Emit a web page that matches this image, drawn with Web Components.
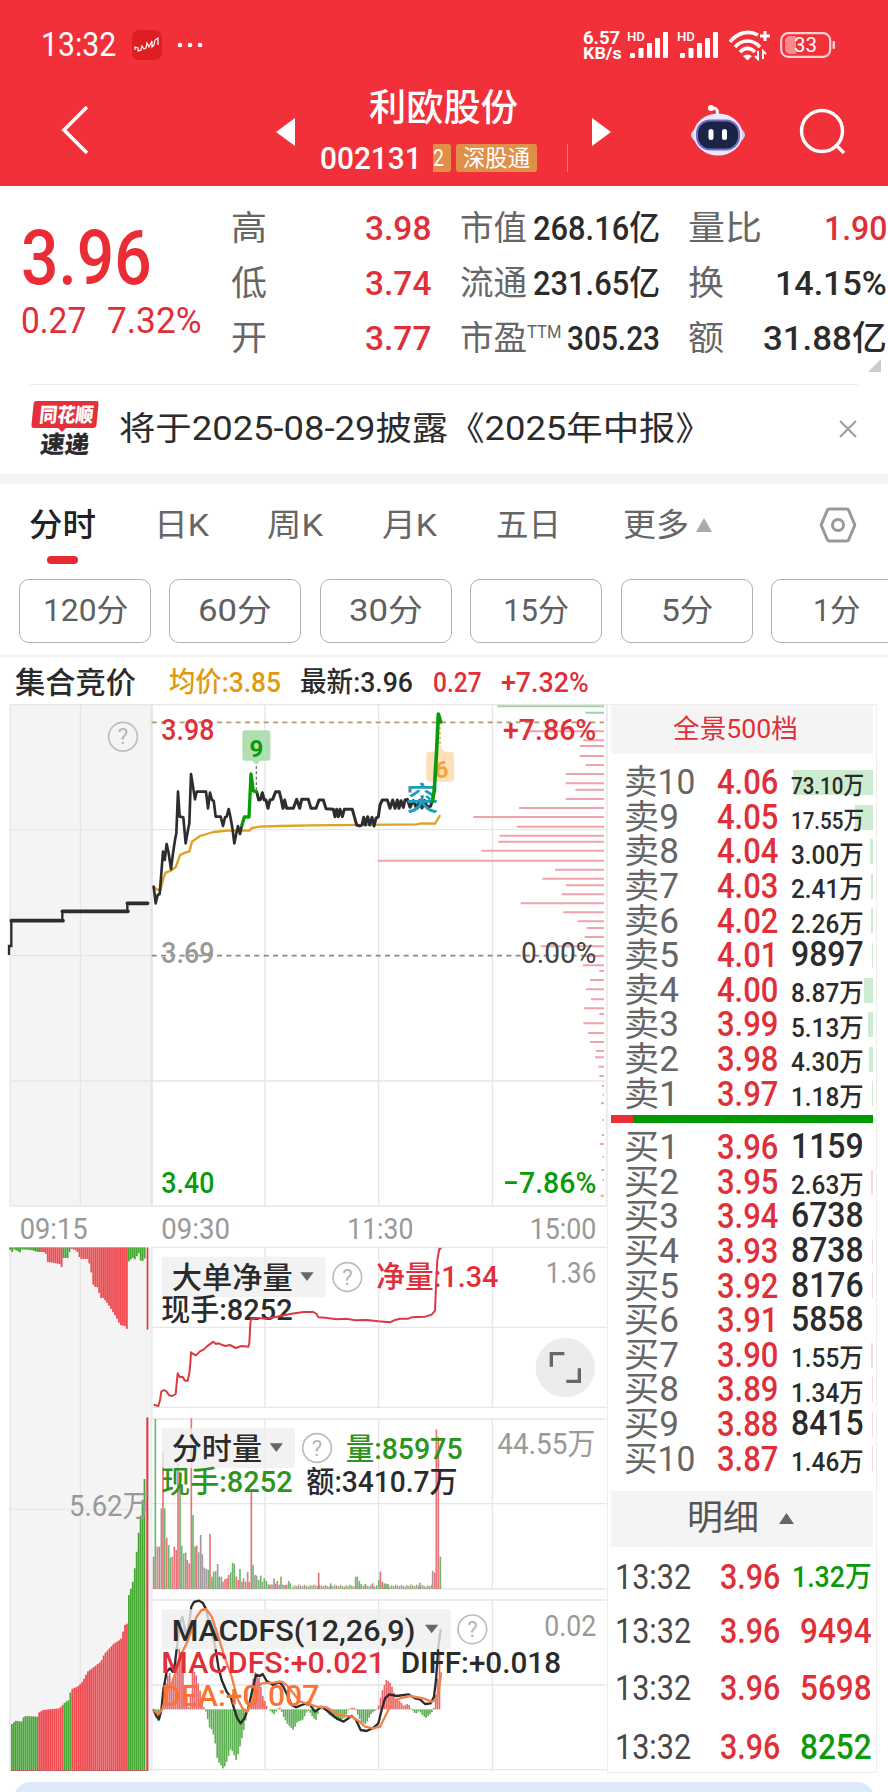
<!DOCTYPE html>
<html lang="zh-CN">
<head>
<meta charset="utf-8">
<title>利欧股份 002131</title>
<style>
    html, body {
        margin: 0;
        background: #fff;
    }
    body {
        width: 888px;
        height: 1792px;
        overflow: hidden;
        font-family: Roboto, "Noto Sans CJK SC", sans-serif;
        font-weight: 400;
        color: #2b2b2b;
    }
</style>
</head>
<body>
<stock-app></stock-app>

<script>
const RED = '#e02f38';
const GREEN = '#0a9a0a';

// text squeezed or stretched horizontally to the width given in "w"
class FitText extends HTMLElement {
    constructor() {
        super();
        this.attachShadow({ mode: 'open' });
        this.shadowRoot.innerHTML = `
        <style>
            :host { display: block; flex: none; white-space: nowrap; line-height: 1.2; }
            span { display: inline-block; transform-origin: 0 50%; }
        </style>
        <span><slot></slot></span>`;
    }
    connectedCallback() {
        const w = Number(this.getAttribute('w'));
        const span = this.shadowRoot.querySelector('span');
        this.style.width = w + 'px';
        if (this.hasAttribute('size')) this.style.fontSize = this.getAttribute('size') + 'px';
        const natural = span.offsetWidth;
        if (natural) span.style.transform = `scaleX(${w / natural})`;
    }
}

class StatusBar extends HTMLElement {
    constructor() {
        super();
        this.attachShadow({ mode: 'open' });
        const signal = `
            <svg width="42" height="30" viewBox="0 0 42 30" fill="#fff">
                <rect x="3" y="23" width="5" height="5" rx="1"/><rect x="11.500" y="18" width="5" height="10" rx="1"/>
                <rect x="20" y="13" width="5" height="15" rx="1"/><rect x="28" y="8" width="5" height="20" rx="1"/>
                <rect x="36" y="2" width="5" height="26" rx="1"/>
                <text x="0" y="11" font-size="12.500" font-weight="500" textLength="18" lengthAdjust="spacingAndGlyphs">HD</text>
            </svg>`;
        this.shadowRoot.innerHTML = `
        <style>
            :host { display: flex; align-items: center; height: 60px; padding: 15px 53px 0 0; color: #fff; box-sizing: content-box; }
            .time { margin-left: 41px; }
            .app { margin-left: 16px; }
            .dots { margin-left: 16px; flex: 1 1 0; min-width: 0; }
            .speed { width: 39px; margin-right: 5px; font-weight: 700; }
            .wifi { margin: 0 9px 0 10px; }
            svg { flex: none; display: block; }
            .s2 { margin-left: 8px; }
        </style>
        <fit-text class="time" w="75" size="33">13:32</fit-text>
        <svg class="app" width="30" height="30" viewBox="0 0 30 30">
            <rect width="30" height="30" rx="7" fill="#dd1f24"/>
            <path d="M3 20v-3l3 1v3l3-1 1-4 2 3 2-1 1-5 2 4 3-6v6l2-2 1-5 3-2v7" fill="none" stroke="#fff" stroke-width="1.200"/>
        </svg>
        <svg class="dots" width="30" height="8" viewBox="0 0 30 8" preserveAspectRatio="xMinYMid"><g fill="#fff"><circle cx="2" cy="4" r="2.300"/><circle cx="12" cy="4" r="2.300"/><circle cx="22" cy="4" r="2.300"/></g></svg>
        <div class="speed">
            <fit-text w="37" size="18" style="line-height:17px">6.57</fit-text>
            <fit-text w="39" size="17" style="line-height:15px">KB/s</fit-text>
        </div>
        ${signal}
        <span class="s2">${signal}</span>
        <svg class="wifi" width="42" height="31" viewBox="0 0 42 31" fill="none" stroke="#fff" stroke-width="3.600">
            <path d="M1 12C9 2 20 0 29 5M6 17c7-8 18-8 25 0M11 22c5-5 10-5 15 0"/>
            <path d="M14 26l4.500 4.500L23 26q-4.500-3-9 0z" fill="#fff" stroke="none"/>
            <path d="M36 1v10M31 6h10" stroke-width="3"/>
            <path d="M29 21v8l-3-3M34 29v-8l3 3" stroke-width="2"/>
        </svg>
        <svg width="55" height="26" viewBox="0 0 55 26">
            <rect x="1.200" y="1.200" width="49" height="23.600" rx="7" fill="none" stroke="#fbd0d0" stroke-width="2.200"/>
            <path d="M10 4h6v18h-6a5 5 0 0 1-5-5V9a5 5 0 0 1 5-5z" fill="#fb8a8c"/>
            <rect x="52.500" y="9" width="2.500" height="8" rx="1" fill="#fbd0d0"/>
            <text x="14" y="20" font-size="20" fill="#fff" textLength="23" lengthAdjust="spacingAndGlyphs">33</text>
        </svg>`;
    }
}

class StockHeader extends HTMLElement {
    constructor() {
        super();
        this.attachShadow({ mode: 'open' });
        this.shadowRoot.innerHTML = `
        <style>
            :host { display: block; height: 186px; background: #f23039; color: #fff; }
            .nav { display: flex; height: 111px; align-items: flex-start; }
            .nav > svg { flex: none; }
            .back { margin: 31px 0 0 60px; }
            .prev { margin: 43px 0 0 188px; }
            .mid { width: 296.500px; height: 111px; }
            .name { padding-top: 12px; margin-left: 74px; font-weight: 500; }
            .code { display: flex; margin: 10px 0 0 25px; height: 34px; align-items: center; }
            .tag { background: #e08f48; height: 28px; border-radius: 3px; display: flex; align-items: center; overflow: hidden; }
            .next { margin-top: 43px; }
            .bot { margin: 29px 0 0 79.500px; }
            .find { margin: 33px 0 0 53px; }
        </style>
        <status-bar></status-bar>
        <div class="nav">
            <svg class="back" width="28" height="48" viewBox="0 0 28 48"><path d="M27 1L4 24l23 23" fill="none" stroke="#fff" stroke-width="3.600"/></svg>
            <svg class="prev" width="19" height="28" viewBox="0 0 19 28"><path d="M0 14L19 0v28z" fill="#fff"/></svg>
            <div class="mid">
                <fit-text class="name" w="149" size="37">利欧股份</fit-text>
                <div class="code">
                    <fit-text w="102" size="31" style="font-weight:500">002131</fit-text>
                    <span class="tag" style="width:18px;margin-left:11px;border-radius:0 3px 3px 0"><fit-text w="11" size="23">2</fit-text></span>
                    <span class="tag" style="width:81px;margin-left:5px;justify-content:center"><fit-text w="67" size="23">深股通</fit-text></span>
                    <span class="tag" style="width:1px;margin-left:30px;border-radius:0"></span>
                </div>
            </div>
            <svg class="next" width="19" height="28" viewBox="0 0 19 28"><path d="M19 14L0 0v28z" fill="#fff"/></svg>
            <svg class="bot" width="56" height="52" viewBox="0 0 56 52">
                <path d="M27 11q2-7-5-7" fill="none" stroke="#fff" stroke-width="3"/><circle cx="21" cy="4" r="3" fill="#fff"/>
                <ellipse cx="28" cy="31" rx="27" ry="12" fill="#cfcdf2"/>
                <ellipse cx="28" cy="30.500" rx="24.500" ry="21" fill="#eceafc"/>
                <rect x="7" y="16.500" width="42" height="29" rx="13" fill="#1b2444" stroke="#7468c8" stroke-width="2"/>
                <rect x="18.500" y="25" width="5" height="11" rx="2.500" fill="#fff"/><rect x="32" y="25" width="5" height="11" rx="2.500" fill="#fff"/>
            </svg>
            <svg class="find" width="48" height="48" viewBox="0 0 48 48" fill="none" stroke="#fff" stroke-width="3.400"><circle cx="23" cy="23" r="20.500"/><path d="M37 37l8 8"/></svg>
        </div>`;
    }
}

class QuotePanel extends HTMLElement {
    constructor() {
        super();
        this.attachShadow({ mode: 'open' });
        this.shadowRoot.innerHTML = `
        <style>
            :host { display: flex; height: 198px; position: relative; }
            .last { width: 231px; padding: 27px 0 0 21px; box-sizing: border-box; color: #ea2d35; font-weight: 500; }
            .chg { display: flex; gap: 21px; color: #e02f38; font-weight: 400; margin-top: -4px; }
            .rows { padding-top: 15px; flex: 1; font-size: 34px; }
            .row { display: flex; align-items: center; height: 55px; }
            .k { color: #666; }
            .r { color: #e02f38; font-weight: 500; }
            .v { font-weight: 500; }
            svg { position: absolute; right: 7px; top: 173px; }
        </style>
        <div class="last">
            <fit-text w="131" size="76">3.96</fit-text>
            <div class="chg"><fit-text w="65" size="36">0.27</fit-text><fit-text w="95" size="36">7.32%</fit-text></div>
        </div>
        <div class="rows">
            <div class="row">
                <fit-text class="k" w="36">高</fit-text>
                <fit-text class="r" w="66" style="margin-left:98px">3.98</fit-text>
                <fit-text class="k" w="67" style="margin-left:29px">市值</fit-text>
                <fit-text class="v" w="127" style="margin-left:6px">268.16亿</fit-text>
                <fit-text class="k" w="74" style="margin-left:28px">量比</fit-text>
                <fit-text class="r" w="63" style="margin-left:62px">1.90</fit-text>
            </div>
            <div class="row">
                <fit-text class="k" w="36">低</fit-text>
                <fit-text class="r" w="66" style="margin-left:98px">3.74</fit-text>
                <fit-text class="k" w="67" style="margin-left:29px">流通</fit-text>
                <fit-text class="v" w="127" style="margin-left:6px">231.65亿</fit-text>
                <fit-text class="k" w="36" style="margin-left:28px">换</fit-text>
                <fit-text class="v" w="112" style="margin-left:51px">14.15%</fit-text>
            </div>
            <div class="row">
                <fit-text class="k" w="36">开</fit-text>
                <fit-text class="r" w="66" style="margin-left:98px">3.77</fit-text>
                <fit-text class="k" w="67" style="margin-left:29px">市盈</fit-text>
                <fit-text class="k" w="34" size="19" style="margin:-12px 0 0 0">TTM</fit-text>
                <fit-text class="v" w="93" style="margin-left:6px">305.23</fit-text>
                <fit-text class="k" w="36" style="margin-left:28px">额</fit-text>
                <fit-text class="v" w="124" style="margin-left:39px">31.88亿</fit-text>
            </div>
        </div>
        <svg width="13" height="13"><path d="M13 0v13H0z" fill="#ccc"/></svg>`;
    }
}

class NewsStrip extends HTMLElement {
    constructor() {
        super();
        this.attachShadow({ mode: 'open' });
        this.shadowRoot.innerHTML = `
        <style>
            :host { display: flex; align-items: center; height: 90px; border-bottom: 10px solid #f4f4f4; position: relative; }
            :host::before { content: ''; position: absolute; left: 30px; right: 30px; top: 0; height: 1px; background: #ececec; }
            .logo { margin-left: 31px; }
            .text { margin-left: 20px; flex: none; }
            .close { margin-left: 127px; }
        </style>
        <svg class="logo" width="68" height="56" viewBox="0 0 68 56">
            <path d="M5 0h60q3 0 2.500 3l-2 21q-.5 3-3.500 3H35l-4 4-4-4H3q-3 0-2.500-3l2-21Q3 0 5 0z" fill="#e5303a"/>
            <g font-weight="900" transform="skewX(-6)">
                <text x="10" y="21" font-size="20" fill="#fff" textLength="54" lengthAdjust="spacingAndGlyphs">同花顺</text>
                <text x="14" y="52" font-size="24" fill="#2b2b2b" textLength="49" lengthAdjust="spacingAndGlyphs">速递</text>
            </g>
        </svg>
        <fit-text class="text" w="593" size="33"><slot></slot></fit-text>
        <svg class="close" width="18" height="18" viewBox="0 0 18 18"><path d="M1 1l16 16M17 1L1 17" stroke="#999" stroke-width="1.800"/></svg>`;
    }
}

class PeriodTabs extends HTMLElement {
    constructor() {
        super();
        this.attachShadow({ mode: 'open' });
        const tabs = [['日K', 55, 58], ['周K', 56, 58], ['月K', 55, 59], ['五日', 65, 59], ['更多', 66, 62]];
        const mins = [['120分', 85], ['60分', 74], ['30分', 74], ['15分', 66], ['5分', 52], ['1分', 47]];
        this.shadowRoot.innerHTML = `
        <style>
            :host { display: block; height: 171px; border-bottom: 2px solid #f0f0f0; overflow: hidden; }
            .tabs { display: flex; align-items: center; height: 80px; color: #666; font-size: 32px; }
            .on { color: #222; font-weight: 500; margin-left: 29px; }
            .line { width: 31px; height: 8px; border-radius: 4px; background: #e52b31; margin: -8px 0 15px 47px; }
            .mins { display: flex; gap: 18.400px; margin-left: 19px; }
            .mins div { flex: none; width: 132px; height: 64px; box-sizing: border-box; border: 1.500px solid #b0b0b0; border-radius: 10px;
                display: flex; align-items: center; justify-content: center; font-size: 31px; color: #606060; }
            .up { margin-left: 7px; }
            .set { margin-left: 107px; }
            .tabs { transform: translateY(1px); }
        </style>
        <div class="tabs">
            <fit-text class="on" w="67">分时</fit-text>
            ${tabs.map(t => `<fit-text w="${t[1]}" style="margin-left:${t[2]}px">${t[0]}</fit-text>`).join('')}
            <svg class="up" width="16" height="14"><path d="M8 0l8 14H0z" fill="#aaa"/></svg>
            <svg class="set" width="38" height="36" viewBox="0 0 38 36" fill="none" stroke="#999" stroke-width="3">
                <path d="M10.500 2h17q1.500 0 2 1l6 14q.5 1 0 2l-6 14q-.5 1-2 1h-17q-1.500 0-2-1l-6-14q-.5-1 0-2l6-14q.5-1 2-1z"/><circle cx="19" cy="18" r="5.500"/>
            </svg>
        </div>
        <div class="line"></div>
        <div class="mins">${mins.map(m => `<div><fit-text w="${m[1]}">${m[0]}</fit-text></div>`).join('')}</div>`;
    }
}

class ChartLegend extends HTMLElement {
    constructor() {
        super();
        this.attachShadow({ mode: 'open' });
        this.shadowRoot.innerHTML = `
        <style>
            :host { display: flex; align-items: center; height: 51px; font-size: 28px; font-weight: 500; box-sizing: border-box; }
        </style>
        <fit-text w="121" size="30" style="margin-left:15px">集合竞价</fit-text>
        <fit-text w="112" style="margin-left:33px;color:#e09a0b">均价:3.85</fit-text>
        <fit-text w="113" style="margin-left:19px">最新:3.96</fit-text>
        <fit-text w="49" style="margin-left:20px;color:${RED}">0.27</fit-text>
        <fit-text w="88" style="margin-left:19px;color:${RED}">+7.32%</fit-text>`;
    }
}

// intraday chart, drawn in units of a third of a pixel
const U = 3;

function label(x1, x2, y, size, fill, str, weight = 400) {
    return `<text x="${x1 - 3}" y="${y}" font-size="${size}" fill="${fill}" font-weight="${weight}" textLength="${x2 - x1 + 6}" lengthAdjust="spacingAndGlyphs">${str}</text>`;
}

function help(cx, cy) {
    return `<circle cx="${cx}" cy="${cy}" r="43" fill="none" stroke="#bdbdbd" stroke-width="5"/>
        <text x="${cx}" y="${cy + 23}" font-size="66" fill="#b5b5b5" text-anchor="middle">?</text>`;
}

function pill(x1, x2, y1, y2) {
    return `<rect x="${x1}" y="${y1}" width="${x2 - x1}" height="${y2 - y1}" rx="10" fill="#efefef" fill-opacity=".8"/>`;
}

function down(x, y) {
    return `<path d="M${x} ${y}h40l-20 26z" fill="#666"/>`;
}

// bars between base and a curve given by [x, y] key points
function bars(points, base, step, width, paint) {
    let out = '';
    let i = 0;
    for (let x = points[0][0]; x <= points[points.length - 1][0]; x += step) {
        while (i < points.length - 2 && points[i + 1][0] < x) i++;
        const [xa, ya] = points[i];
        const [xb, yb] = points[i + 1];
        const y = ya + (yb - ya) * (x - xa) / (xb - xa);
        out += `<rect x="${x.toFixed(1)}" y="${Math.min(y, base).toFixed(1)}" width="${width}" height="${Math.abs(y - base).toFixed(1)}" fill="${paint(x, y)}"/>`;
    }
    return out;
}

function grid(top, mids, bottom) {
    const h = [top, ...mids, bottom].map(y => `M453 ${y}H1820`).join('');
    const v = [795, 1136, 1477].map(x => `M${x} ${top}V${bottom}`).join('');
    return `<path d="${h}${v}" stroke="#e6e6e6" stroke-width="4" fill="none"/>`;
}

const auctionNet = [[28, 180], [34, 186], [40, 178], [58, 187], [64, 178], [90, 180], [112, 186], [134, 186], [138, 215], [160, 219], [180, 223], [184, 238], [188, 204], [204, 204],
    [207, 175], [228, 182], [238, 207], [262, 207], [270, 240], [278, 290], [292, 292], [298, 328], [304, 320], [320, 340], [345, 380], [358, 405], [372, 408], [379, 418], [383, 215], [395, 203], [404, 210], [412, 184], [422, 222], [430, 200], [434, 218], [437, 180]];
const auctionVol = [[33, 972], [45, 962], [62, 965], [70, 948], [110, 950], [115, 937], [127, 930], [175, 925], [185, 915], [195, 905], [205, 900], [210, 868], [230, 860], [245, 845], [260, 815], [280, 800],
    [300, 785], [310, 762], [340, 730], [360, 718], [372, 675], [380, 670], [384, 585], [395, 550], [403, 495], [410, 432], [416, 370], [424, 310], [430, 245], [436, 185]];
const volume = [[461, 470, 'r'], [466, 57, 'g'], [472, 440, 'k'], [478, 440, 'r'], [484, 325, 'k'], [489, 155, 'r'], [494, 325, 'g'], [500, 413, 'r'], [506, 435, 'g'], [511, 473, 'g'], [517, 470, 'r'],
    [523, 440, 'r'], [529, 450, 'r'], [534, 190, 'r'], [540, 215, 'g'], [545, 437, 'g'], [551, 460, 'k'], [557, 458, 'g'], [562, 480, 'r'], [568, 490, 'r'], [574, 55, 'r'], [579, 345, 'g'], [585, 440, 'g'],
    [590, 437, 'r'], [596, 457, 'k'], [602, 405, 'k'], [607, 463, 'k'], [613, 503, 'k'], [619, 507, 'k'], [625, 510, 'g'], [630, 402, 'r'], [636, 530, 'g'], [641, 515, 'g'], [647, 513, 'g'], [653, 492, 'k'],
    [658, 530, 'g'], [664, 530, 'k'], [669, 545, 'k'], [675, 537, 'r'], [681, 535, 'r'], [686, 525, 'r'], [692, 517, 'g'], [698, 488, 'g'], [703, 492, 'g'], [709, 530, 'r'], [715, 540, 'r'], [720, 507, 'g'],
    [726, 545, 'r'], [731, 535, 'k'], [737, 545, 'r'], [743, 516, 'k'], [748, 545, 'r'], [754, 275, 'r'], [759, 495, 'g'], [765, 525, 'k'], [770, 527, 'k'], [776, 540, 'g'], [782, 527, 'g'], [787, 545, 'k'],
    [793, 535, 'g'], [799, 543, 'g'], [805, 553, 'g'], [810, 554, 'r'], [816, 553, 'k'], [822, 535, 'k'], [827, 551, 'r'], [832, 543, 'r'], [838, 554, 'k'], [843, 530, 'g'], [849, 554, 'k'], [855, 555, 'g'], [860, 554, 'r'], [866, 543, 'g'], [871, 550, 'g'],
    [956, 518, 'r'], [992, 550, 'k'], [1067, 530, 'k'], [1072, 530, 'g'], [1078, 543, 'g'], [1084, 552, 'g'], [1096, 552, 'g'], [1118, 550, 'r'], [1136, 540, 'g'], [1141, 515, 'r'], [1147, 545, 'r'], [1153, 550, 'k'], [1158, 551, 'g'], [1164, 552, 'g'],
    [1260, 548, 'k'], [1298, 512, 'k'], [1304, 518, 'r'], [1309, 88, 'r'], [1315, 110, 'r'], [1321, 470, 'g']];
const macd = [[461, 935], [472, 965], [480, 940], [488, 920], [495, 850], [505, 810], [512, 850], [520, 835], [530, 800], [537, 720], [545, 800], [550, 850], [556, 880], [563, 925], [570, 880], [575, 810], [585, 820],
    [592, 850], [600, 880], [610, 925], [618, 940], [624, 980], [634, 990], [642, 1020], [650, 1080], [660, 1095], [668, 1108], [678, 1085], [690, 1045], [698, 1060], [707, 1082], [715, 1050], [722, 1020], [730, 985], [740, 935],
    [750, 900], [758, 830], [765, 812], [775, 835], [785, 885], [800, 925], [820, 943], [832, 925], [838, 922], [848, 950], [862, 975], [878, 990], [890, 965], [905, 960], [920, 932], [925, 932], [935, 950], [945, 961], [955, 930], [972, 928],
    [985, 945], [1010, 962], [1030, 955], [1045, 926], [1058, 922], [1065, 930], [1080, 965], [1095, 973], [1112, 940], [1126, 930], [1134, 915], [1145, 870], [1157, 838], [1170, 850], [1185, 895], [1200, 905], [1208, 918], [1222, 910], [1232, 928],
    [1245, 942], [1255, 932], [1265, 945], [1275, 955], [1290, 940], [1298, 930], [1304, 890], [1311, 830], [1317, 740], [1321, 655]];
const depth = [[124, 680], [151, 850], [168, 840], [198, 838], [225, 857], [252, 797], [280, 797], [299, 826], [327, 797], [354, 657], [381, 520], [410, 650], [437, 598], [455, 595], [482, 545], [512, 233],
    [539, 765], [566, 727], [586, 798], [613, 785], [640, 662], [667, 790], [694, 833], [714, 860], [741, 854], [769, 722], [798, 850], [826, 848], [843, 898], [870, 870], [898, 858],
    [928, 873], [955, 852], [972, 898], [1000, 850], [1029, 864], [1056, 870], [1083, 888], [1102, 885], [1130, 895], [1158, 898], [1187, 905], [1214, 908], [1240, 903], [1290, 907], [1335, 905], [1362, 900], [1400, 908], [1440, 904], [1470, 908], [1517, 902]];

const priceLine = '461,590 467,640 473,615 479,612 484,550 489,485 494,510 500,462 506,490 513,537 519,490 525,450 529,430 534,305 539,380 550,382 557,460 563,425 568,400 573,252 579,290 585,328 590,305 618,305 624,355 630,308 636,330 641,332 647,380 662,380 669,408 675,382 680,380 686,357 692,385 698,420 703,460 709,430 714,408 720,432 726,405';
const priceLine2 = '770,305 776,330 782,328 787,308 793,330 798,330 804,355 810,330 818,328 827,305 838,305 844,330 849,355 854,330 860,355 880,355 890,328 899,355 905,328 925,328 933,355 948,355 957,330 970,330 978,356 1000,358 1005,380 1010,358 1015,380 1020,358 1027,380 1033,358 1057,358 1063,380 1070,405 1080,408 1086,405 1091,382 1096,405 1103,380 1109,405 1116,382 1122,408 1128,385 1135,380 1140,345 1147,330 1162,330 1170,355 1178,330 1185,355 1192,330 1197,355 1203,332 1210,352 1215,330 1222,328 1230,352 1240,332 1250,355 1258,332 1266,354 1274,332 1282,352 1292,348 1297,330';
const avgLine = '461,592 470,598 482,600 490,565 497,548 515,541 528,530 540,495 555,488 568,484 576,455 600,438 640,426 690,421 748,422 755,414 780,410 840,408 930,406 1250,403 1265,400 1305,401 1319,378';
const netLine = '463,645 475,648 480,630 484,605 492,600 500,605 507,616 517,618 527,612 530,580 533,550 540,562 547,560 555,572 563,572 568,550 571,520 573,487 580,492 588,496 600,484 612,478 620,470 640,455 648,462 655,460 675,468 690,465 707,474 725,468 745,470 748,460 751,400 753,388 775,384 800,386 830,380 870,372 910,366 940,366 950,372 955,382 975,383 1010,388 1040,386 1065,391 1100,390 1135,394 1170,397 1185,390 1200,386 1225,386 1235,382 1275,380 1295,374 1305,362 1308,290 1312,210 1318,176 1322,176';
const diffLine = '461,930 470,950 477,958 484,930 490,870 500,815 510,805 518,815 525,790 532,730 540,670 547,650 555,690 560,705 568,665 574,620 582,606 597,602 608,608 617,625 630,680 645,735 655,800 665,840 680,875 692,890 702,925 712,955 722,970 733,955 745,925 757,870 768,825 780,828 788,822 800,843 820,855 838,845 850,860 862,885 875,915 888,922 905,915 925,908 945,935 965,920 985,935 1010,955 1030,965 1055,948 1068,960 1082,990 1100,993 1122,982 1135,970 1145,930 1155,895 1168,883 1190,888 1225,883 1245,895 1260,898 1275,912 1292,910 1302,890 1308,840 1315,740 1322,690';
const deaLine = '461,930 475,943 488,925 500,880 515,850 530,810 545,760 560,730 575,690 590,650 605,630 618,627 635,650 655,710 675,775 695,830 712,895 727,925 742,935 755,905 770,865 785,850 820,848 845,845 860,855 880,880 900,905 920,910 950,920 980,922 1000,935 1020,945 1055,950 1075,962 1095,980 1120,985 1140,980 1155,950 1175,910 1200,895 1230,888 1270,895 1295,905 1308,900 1317,870 1323,820';

class MinuteChart extends HTMLElement {
    constructor() {
        super();
        this.attachShadow({ mode: 'open' });
        this.shadowRoot.innerHTML = `
        <style>
            :host { display: block; width: 607px; height: 1067px; flex: none; }
            svg { display: block; }
            polyline { fill: none; stroke-linejoin: round; stroke-linecap: round; }
        </style>
        <svg width="607" height="1067" viewBox="0 0 ${607 * U} ${1067 * U}">
            ${this.pricePane()}
            ${this.timeAxis()}
            ${this.netPane()}
            ${this.volumePane()}
            ${this.macdPane()}
        </svg>`;
    }

    pricePane() {
        return `<g transform="translate(0 -42)">
            <rect x="30" y="44" width="423" height="1504" fill="#f4f4f4"/>
            <path d="M30 44H453M30 419H453M30 797H453M30 1173H453M30 1548H453M30 44V1548M241 44V1548" stroke="#e6e6e6" stroke-width="4"/>
            ${grid(44, [419, 1173], 1548)}
            <path d="M455 44V1548" stroke="#e4e4e4" stroke-width="7"/>
            <path d="M1819 44V1548" stroke="#eee" stroke-width="4"/>
            <path d="M455 97H1812" stroke="#b59a68" stroke-width="5" stroke-dasharray="15 13"/>
            <path d="M455 797H1812" stroke="#888" stroke-width="5" stroke-dasharray="15 13"/>
            <path d="M1492 49H1812M1756 68H1812" stroke="#9fd3a1" stroke-width="6"/>
            <path d="${depth.map(d => `M${d[1] + 900} ${d[0]}H1812`).join('')}" stroke="#f1a3aa" stroke-width="6"/>
            <path d="M27 795V768H34V692H187V664H382V640H443" fill="none" stroke="#2d2d2d" stroke-width="7"/>
            <path d="M34 692H189M187 664H384M382 640H443" fill="none" stroke="#2d2d2d" stroke-width="11" stroke-linecap="round"/>
            <polyline points="${avgLine}" stroke="#e0a020" stroke-width="7"/>
            <polyline points="${priceLine}" stroke="#2d2d2d" stroke-width="8"/>
            <polyline points="${priceLine2}" stroke="#2d2d2d" stroke-width="9"/>
            <polyline points="726,405 733,381 747,381 753,252 760,303 768,305" stroke="#0a9a0a" stroke-width="10"/>
            <path d="M769 228V305" stroke="#777" stroke-width="4" stroke-dasharray="9 7"/>
            <path d="M737 121h64q10 0 10 10v72q0 9-10 9h-20l-12 13-12-13h-20q-10 0-10-9v-72q0-10 10-10z" fill="#b0e0b2"/>
            <text x="769" y="201" font-size="72" font-weight="700" fill="#0a9a0a" text-anchor="middle">9</text>
            <path d="M1320 98V172" stroke="#e8a040" stroke-width="4" stroke-dasharray="8 6"/>
            <path d="M1289 185h20l12-13 12 13h19q10 0 10 10v70q0 10-10 10h-63q-10 0-10-10v-70q0-10 10-10z" fill="#fde0b8"/>
            <text x="1325" y="265" font-size="72" font-weight="700" fill="#f3a338" text-anchor="middle">6</text>
            <text x="1218" y="360" font-size="97" font-weight="500" fill="#1f9dbd">突</text>
            <polyline points="1297,335 1303,300 1310,180 1315,72 1322,95" stroke="#0a9a0a" stroke-width="11"/>
            ${help(369, 140)}
            ${label(487, 640, 150, 88, RED, '3.98', 500)}
            ${label(1512, 1786, 150, 88, RED, '+7.86%', 500)}
            ${label(487, 640, 818, 88, '#999', '3.69', 500)}
            ${label(1566, 1786, 818, 88, '#444', '0.00%')}
            ${label(487, 640, 1508, 88, GREEN, '3.40', 500)}
            ${label(1512, 1786, 1508, 88, GREEN, '−7.86%', 500)}
        </g>`;
    }

    timeAxis() {
        return `<g transform="translate(0 1458)">
            ${label(62, 260, 148, 88, '#999', '09:15')}
            ${label(487, 687, 148, 88, '#999', '09:30')}
            ${label(1045, 1237, 148, 88, '#999', '11:30')}
            ${label(1592, 1786, 148, 88, '#999', '15:00')}
        </g>`;
    }

    netPane() {
        const paint = x => x < 112 || (x > 186 && x < 207) || x > 382 ? '#43a732' : '#ee4a4f';
        return `<g transform="translate(0 1458)">
            <rect x="28" y="172" width="425" height="1571" fill="#f4f4f4"/>
            <path d="M30 172V1743M241 172V1743M30 958H453" stroke="#e6e6e6" stroke-width="4"/>
            ${bars(auctionNet, 172, 5.93, 5.4, paint)}
            <rect x="440" y="172" width="5" height="247" fill="#e0343c"/>
            <path d="M455 172V1743" stroke="#e9edf0" stroke-width="6"/>
            ${grid(172, [412], 652)}
            ${pill(485, 977, 200, 321)}
            ${label(518, 875, 293, 90, '#2b2b2b', '大单净量', 500)}
            ${down(901, 247)}
            ${help(1042, 261)}
            ${label(1132, 1492, 292, 90, RED, '净量:1.34', 500)}
            ${label(487, 875, 390, 90, '#2b2b2b', '现手:8252', 500)}
            ${label(1640, 1786, 280, 88, '#999', '1.36')}
            <polyline points="${netLine}" stroke="#da3a42" stroke-width="6"/>
            <circle cx="1696" cy="533" r="89" fill="#ececec"/>
            <path d="M1693 491H1654V530M1699 574H1738V535" fill="none" stroke="#666" stroke-width="10"/>
        </g>`;
    }

    volumePane() {
        const paint = x => x < 112 || (x > 186 && x < 213) || x > 382 ? '#43a732' : '#ee4a4f';
        const tone = { r: '#e9737a', g: '#74b56e', k: '#a29a9c' };
        let quiet = '';
        // low traded minutes between the peaks
        for (let x = 877; x < 1298; x += 5.7) {
            const h = 7 + (x * 7 % 11) * .6;
            quiet += `<rect x="${x.toFixed(1)}" y="${567 - h}" width="4" height="${h}" fill="${tone['rgkg'[Math.floor(x / 5.7) % 4]]}"/>`;
        }
        return `<g transform="translate(0 2088)">
            ${grid(57, [311], 567)}
            ${bars(auctionVol, 1112, 5.85, 5.3, paint)}
            <rect x="439" y="52" width="6" height="1060" fill="#e0343c"/>
            <path d="M33 1112H445" stroke="#b55" stroke-width="3"/>
            ${volume.map(v => `<rect x="${v[0] - 2.5}" y="${v[1]}" width="5" height="${567 - v[1]}" fill="${tone[v[2]]}"/>`).join('')}
            ${quiet}
            ${pill(485, 885, 85, 204)}
            ${label(518, 783, 177, 90, '#2b2b2b', '分时量', 500)}
            ${down(809, 130)}
            ${help(951, 144)}
            ${label(1040, 1385, 177, 90, '#2e9421', '量:85975', 500)}
            ${label(1495, 1783, 163, 88, '#999', '44.55万')}
            ${label(487, 875, 276, 90, '#2e9421', '现手:8252', 500)}
            ${label(922, 1370, 276, 90, '#2b2b2b', '额:3410.7万', 500)}
            ${label(210, 447, 348, 88, '#999', '5.62万')}
        </g>`;
    }

    macdPane() {
        const paint = (x, y) => y < 928 ? '#e8686e' : '#5cb052';
        return `<g transform="translate(0 2088)">
            ${grid(600, [855], 1109)}
            ${bars(macd, 928, 5.7, 4.9, paint)}
            <polyline points="${diffLine}" stroke="#2b2b2b" stroke-width="7"/>
            ${pill(485, 1352, 628, 748)}
            <polyline points="${deaLine}" stroke="#f4814a" stroke-width="7"/>
            ${label(518, 1243, 724, 90, '#2b2b2b', 'MACDFS(12,26,9)', 500)}
            ${down(1275, 674)}
            ${help(1417, 688)}
            ${label(1636, 1786, 707, 88, '#999', '0.02')}
            ${label(487, 1152, 820, 90, RED, 'MACDFS:+0.021', 500)}
            ${label(1205, 1680, 820, 90, '#2b2b2b', 'DIFF:+0.018', 500)}
            ${label(487, 955, 918, 90, '#fb7233', 'DEA:+0.007', 500)}
        </g>`;
    }
}

class BookRow extends HTMLElement {
    constructor() {
        super();
        this.attachShadow({ mode: 'open' });
    }
    connectedCallback() {
        const name = this.getAttribute('name');
        const vol = this.getAttribute('vol');
        const bar = this.getAttribute('bar') || 0;
        const size = !vol.includes('万') ? 35 : vol.length > 5 ? 24.5 : 26;
        this.shadowRoot.innerHTML = `
        <style>
            :host { display: flex; height: 34.600px; align-items: center; font-size: 34.500px; font-weight: 500;
                background: linear-gradient(${this.getAttribute('tint')}, ${this.getAttribute('tint')}) no-repeat right 0 top 5px / ${bar}px 25px; }
            fit-text { line-height: 30px; }
            .n { color: #666; font-weight: 400; margin-left: 12.500px; }
            .p { color: ${RED}; margin-left: auto; }
            .v { margin: ${(35 - size) * .7}px 9px 0 13.500px; }
        </style>
        <fit-text class="n" w="${name.length > 2 ? 71 : 55}">${name}</fit-text>
        <fit-text class="p" w="61">${this.getAttribute('price')}</fit-text>
        <fit-text class="v" w="73" size="${size}">${vol}</fit-text>`;
    }
}

class OrderBook extends HTMLElement {
    constructor() {
        super();
        this.attachShadow({ mode: 'open' });
        const sell = [['卖10', '4.06', '73.10万', 80], ['卖9', '4.05', '17.55万', 18], ['卖8', '4.04', '3.00万', 3], ['卖7', '4.03', '2.41万', 2.5], ['卖6', '4.02', '2.26万', 2.5],
            ['卖5', '4.01', '9897', 1], ['卖4', '4.00', '8.87万', 9], ['卖3', '3.99', '5.13万', 5], ['卖2', '3.98', '4.30万', 4], ['卖1', '3.97', '1.18万', 1]];
        const buy = [['买1', '3.96', '1159', 0], ['买2', '3.95', '2.63万', 2.5], ['买3', '3.94', '6738', 0], ['买4', '3.93', '8738', 1], ['买5', '3.92', '8176', 1],
            ['买6', '3.91', '5858', 0], ['买7', '3.90', '1.55万', 2], ['买8', '3.89', '1.34万', 1], ['买9', '3.88', '8415', 1], ['买10', '3.87', '1.46万', 1]];
        const trades = [['1.32万', GREEN, 54, 80], ['9494', RED, 55, 72], ['5698', RED, 59, 72], ['8252', GREEN, 58, 72]];
        const rows = (list, tint) => list.map(r => `<book-row name="${r[0]}" price="${r[1]}" vol="${r[2]}" bar="${r[3]}" tint="${tint}"></book-row>`).join('');
        this.shadowRoot.innerHTML = `
        <style>
            :host { display: block; width: 262px; height: 1067px; padding: 0 3px; border: 1px solid #eee; font-size: 35px; }
            .all { height: 49px; background: #f4f4f4; color: ${RED}; display: flex; align-items: center; margin-bottom: 11px; }
            .ratio { height: 8px; margin: 4px 0 7px; background: linear-gradient(90deg, #e8303a 22px, #009a00 22px); }
            .detail { height: 56px; background: #f4f4f4; color: #555; display: flex; align-items: center; margin: 15px 0 4px; }
            .t { display: flex; align-items: center; color: #484848; }
            .t fit-text:nth-child(2) { margin-left: 29px; color: ${RED}; font-weight: 500; }
            .t fit-text:nth-child(3) { margin-left: auto; margin-right: 1px; font-weight: 500; }
        </style>
        <div class="all"><fit-text w="125" size="26" style="margin-left:62px">全景500档</fit-text></div>
        ${rows(sell, '#cdeccf')}
        <div class="ratio"></div>
        ${rows(buy, '#f8d8da')}
        <div class="detail">
            <fit-text w="72" size="35" style="margin-left:76px">明细</fit-text>
            <svg width="15" height="11" style="margin-left:20px"><path d="M7.500 0L15 11H0z" fill="#666"/></svg>
        </div>
        ${trades.map(t => `<div class="t" style="height:${t[2]}px"><fit-text w="76" style="margin-left:4px">13:32</fit-text><fit-text w="60">3.96</fit-text>
            <fit-text w="${t[3]}" size="${t[3] > 75 ? 29 : 35}" style="color:${t[1]}">${t[0]}</fit-text></div>`).join('')}`;
    }
}

class StockApp extends HTMLElement {
    constructor() {
        super();
        this.attachShadow({ mode: 'open' });
        this.shadowRoot.innerHTML = `
        <style>
            :host { display: block; width: 888px; height: 1792px; overflow: hidden; }
            .main { display: flex; margin-top: -4px; }
            .foot { height: 20px; margin: 9px 13px 0; border-radius: 18px 18px 0 0; background: #dce9fa; }
        </style>
        <stock-header></stock-header>
        <quote-panel></quote-panel>
        <news-strip>将于2025-08-29披露《2025年中报》</news-strip>
        <period-tabs></period-tabs>
        <chart-legend></chart-legend>
        <div class="main">
            <minute-chart></minute-chart>
            <order-book></order-book>
        </div>
        <div class="foot"></div>`;
    }
}

customElements.define('fit-text', FitText);
customElements.define('status-bar', StatusBar);
customElements.define('stock-header', StockHeader);
customElements.define('quote-panel', QuotePanel);
customElements.define('news-strip', NewsStrip);
customElements.define('period-tabs', PeriodTabs);
customElements.define('chart-legend', ChartLegend);
customElements.define('minute-chart', MinuteChart);
customElements.define('book-row', BookRow);
customElements.define('order-book', OrderBook);
customElements.define('stock-app', StockApp);
</script>
</body>
</html>
